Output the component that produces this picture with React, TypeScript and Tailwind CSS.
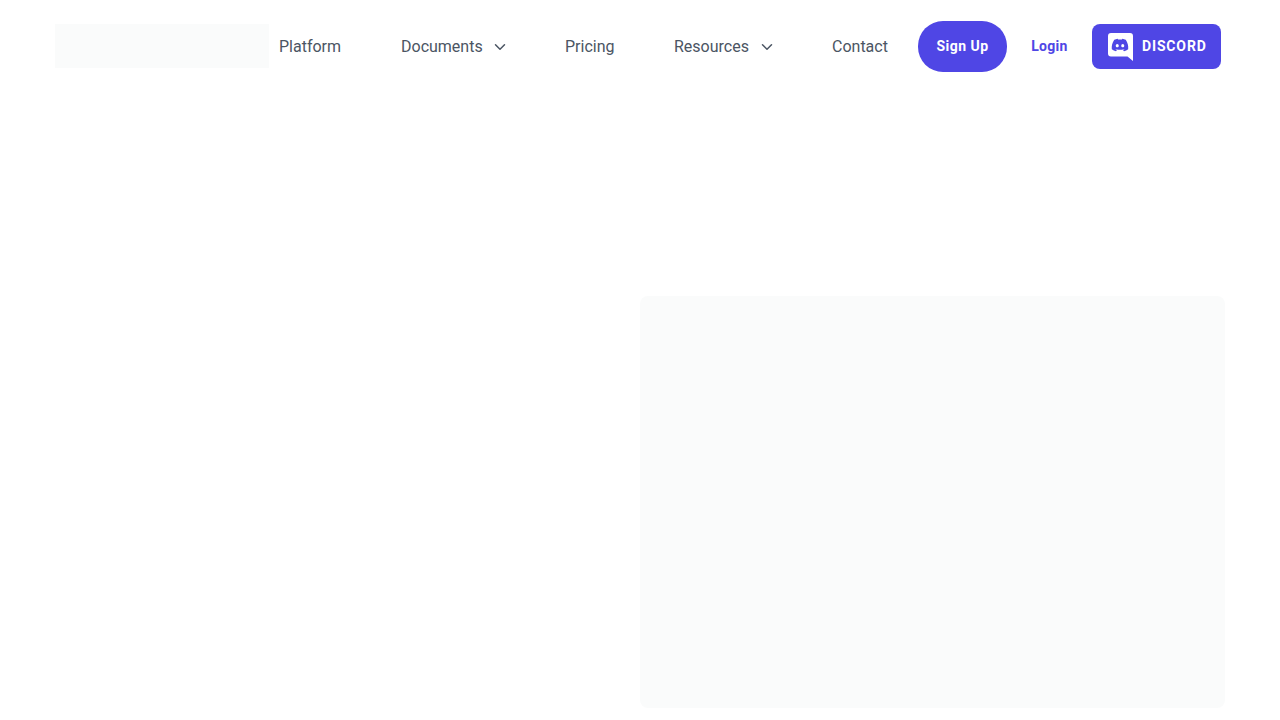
import { FaDiscord } from "react-icons/fa";
import { ChevronDown } from "lucide-react";

const font = "font-['Roboto','Liberation_Sans',sans-serif]";

function NavLink({ label, width, caret }: { label: string; width: string; caret?: string }) {
  return (
    <a className="flex items-center text-[16px] leading-[24px] text-[#4b5563]">
      <span className={`${width} whitespace-nowrap`}>{label}</span>
      {caret && (
        <span className={`${caret} flex w-[11px] items-center justify-center`}>
          <ChevronDown className="h-[18px] w-[18px] shrink-0 text-[#4b5563]" strokeWidth={2} />
        </span>
      )}
    </a>
  );
}

export default function App() {
  return (
    <div className={`${font} h-[720px] w-[1280px] overflow-hidden bg-white`}>
      <header className="flex h-[92px] items-start pl-[55px] pt-[21px]">
        <div className="mt-[3px] h-[44px] w-[214px] bg-[#fafbfb]" />
        <nav className="ml-[10px] flex h-[51px] items-center gap-[60px]">
          <NavLink label="Platform" width="w-[62px]" />
          <NavLink label="Documents" width="w-[82px]" caret="ml-[11px]" />
          <NavLink label="Pricing" width="w-[49px]" />
          <NavLink label="Resources" width="w-[75px]" caret="ml-[12px]" />
          <NavLink label="Contact" width="w-[56px]" />
        </nav>
        <a className="ml-[30px] flex h-[51px] w-[89px] items-center justify-center rounded-[25px] bg-[#4f46e5] text-[14px] font-bold tracking-[0.45px] text-white">
          Sign Up
        </a>
        <a className="ml-[24px] flex h-[51px] w-[37px] items-center justify-center whitespace-nowrap text-[14px] font-bold tracking-[0.3px] text-[#4f46e5]">
          Login
        </a>
        <a className="ml-[24px] mt-[3px] flex h-[45px] w-[129px] items-center rounded-[8px] bg-[#4f46e5] pl-[16px] text-[14px] font-bold tracking-[0.85px] text-white">
          <span className="relative mr-[9px] h-[28px] w-[25px] shrink-0">
            <svg viewBox="0 0 25 28" className="h-[28px] w-[25px]">
              <path
                d="M3 0H22A3 3 0 0 1 25 3V28L19.5 23.5H3A3 3 0 0 1 0 20.5V3A3 3 0 0 1 3 0Z"
                fill="#ffffff"
              />
            </svg>
            <FaDiscord className="absolute left-[3px] top-[3px] h-[18px] w-[18px] text-[#4f46e5]" />
          </span>
          DISCORD
        </a>
      </header>
      <main className="flex justify-end pr-[55px] pt-[204px]">
        <div className="h-[412px] w-[585px] rounded-[8px] bg-[#fafbfb]" />
      </main>
    </div>
  );
}
